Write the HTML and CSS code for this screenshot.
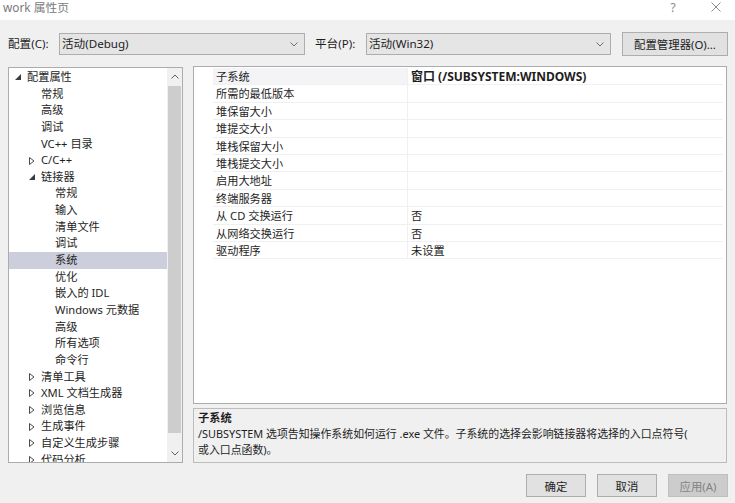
FILE: index.html
```html
<!DOCTYPE html>
<html lang="zh-CN">
<head>
<meta charset="utf-8">
<title>work 属性页</title>
<link rel="stylesheet" href="styles.css">
</head>
<body>
<div class="window">
  <div class="titlebar">
    <span class="title">work 属性页</span>
    <span class="tb-help">?</span>
    <span class="tb-close"><svg width="10" height="10" viewBox="0 0 10 10"><path d="M0.5 0.5 L9.5 9.5 M9.5 0.5 L0.5 9.5" stroke="#8a8a8a" stroke-width="1" fill="none"/></svg></span>
  </div>

  <div class="toolbar">
    <span class="lbl">配置(C):</span>
    <div class="combo combo-config">
      <span class="combo-text">活动(Debug)</span>
      <svg class="chev" width="8" height="5" viewBox="0 0 8 5"><path d="M0.5 0.5 L4 4 L7.5 0.5" stroke="#6f6f6f" fill="none"/></svg>
    </div>
    <span class="lbl lbl-platform">平台(P):</span>
    <div class="combo combo-platform">
      <span class="combo-text">活动(Win32)</span>
      <svg class="chev" width="8" height="5" viewBox="0 0 8 5"><path d="M0.5 0.5 L4 4 L7.5 0.5" stroke="#6f6f6f" fill="none"/></svg>
    </div>
    <button class="btn btn-manager">配置管理器(O)...</button>
  </div>

  <div class="main">
    <div class="tree">
      <div class="tree-items">
        <div class="trow lv0"><span class="tog"><svg width="6" height="6" viewBox="0 0 6 6"><path d="M6 0 L6 6 L0 6 Z" fill="#3c3c3c"/></svg></span><span>配置属性</span></div>
        <div class="trow lv1"><span class="tog"></span><span>常规</span></div>
        <div class="trow lv1"><span class="tog"></span><span>高级</span></div>
        <div class="trow lv1"><span class="tog"></span><span>调试</span></div>
        <div class="trow lv1"><span class="tog"></span><span>VC++ 目录</span></div>
        <div class="trow lv1"><span class="tog"><svg width="6" height="8" viewBox="0 0 6 8"><path d="M0.5 0.5 L5 4 L0.5 7.5 Z" fill="none" stroke="#4a4a4a"/></svg></span><span>C/C++</span></div>
        <div class="trow lv1"><span class="tog"><svg width="6" height="6" viewBox="0 0 6 6"><path d="M6 0 L6 6 L0 6 Z" fill="#3c3c3c"/></svg></span><span>链接器</span></div>
        <div class="trow lv2"><span class="tog"></span><span>常规</span></div>
        <div class="trow lv2"><span class="tog"></span><span>输入</span></div>
        <div class="trow lv2"><span class="tog"></span><span>清单文件</span></div>
        <div class="trow lv2"><span class="tog"></span><span>调试</span></div>
        <div class="trow lv2 selected"><span class="tog"></span><span>系统</span></div>
        <div class="trow lv2"><span class="tog"></span><span>优化</span></div>
        <div class="trow lv2"><span class="tog"></span><span>嵌入的 IDL</span></div>
        <div class="trow lv2"><span class="tog"></span><span>Windows 元数据</span></div>
        <div class="trow lv2"><span class="tog"></span><span>高级</span></div>
        <div class="trow lv2"><span class="tog"></span><span>所有选项</span></div>
        <div class="trow lv2"><span class="tog"></span><span>命令行</span></div>
        <div class="trow lv1"><span class="tog"><svg width="6" height="8" viewBox="0 0 6 8"><path d="M0.5 0.5 L5 4 L0.5 7.5 Z" fill="none" stroke="#4a4a4a"/></svg></span><span>清单工具</span></div>
        <div class="trow lv1"><span class="tog"><svg width="6" height="8" viewBox="0 0 6 8"><path d="M0.5 0.5 L5 4 L0.5 7.5 Z" fill="none" stroke="#4a4a4a"/></svg></span><span>XML 文档生成器</span></div>
        <div class="trow lv1"><span class="tog"><svg width="6" height="8" viewBox="0 0 6 8"><path d="M0.5 0.5 L5 4 L0.5 7.5 Z" fill="none" stroke="#4a4a4a"/></svg></span><span>浏览信息</span></div>
        <div class="trow lv1"><span class="tog"><svg width="6" height="8" viewBox="0 0 6 8"><path d="M0.5 0.5 L5 4 L0.5 7.5 Z" fill="none" stroke="#4a4a4a"/></svg></span><span>生成事件</span></div>
        <div class="trow lv1"><span class="tog"><svg width="6" height="8" viewBox="0 0 6 8"><path d="M0.5 0.5 L5 4 L0.5 7.5 Z" fill="none" stroke="#4a4a4a"/></svg></span><span>自定义生成步骤</span></div>
        <div class="trow lv1"><span class="tog"><svg width="6" height="8" viewBox="0 0 6 8"><path d="M0.5 0.5 L5 4 L0.5 7.5 Z" fill="none" stroke="#4a4a4a"/></svg></span><span>代码分析</span></div>
      </div>
      <div class="vscroll">
        <div class="sb-btn"><svg width="8" height="5" viewBox="0 0 8 5"><path d="M0.5 4.5 L4 1 L7.5 4.5" stroke="#606060" fill="none"/></svg></div>
        <div class="sb-track"><div class="sb-thumb"></div></div>
        <div class="sb-btn"><svg width="8" height="5" viewBox="0 0 8 5"><path d="M0.5 0.5 L4 4 L7.5 0.5" stroke="#606060" fill="none"/></svg></div>
      </div>
    </div>

    <div class="right">
      <div class="grid">
        <div class="grow"><div class="gut"></div><div class="gname sel">子系统</div><div class="gval bold">窗口 (/SUBSYSTEM:WINDOWS)</div></div>
        <div class="grow"><div class="gut"></div><div class="gname">所需的最低版本</div><div class="gval"></div></div>
        <div class="grow"><div class="gut"></div><div class="gname">堆保留大小</div><div class="gval"></div></div>
        <div class="grow"><div class="gut"></div><div class="gname">堆提交大小</div><div class="gval"></div></div>
        <div class="grow"><div class="gut"></div><div class="gname">堆栈保留大小</div><div class="gval"></div></div>
        <div class="grow"><div class="gut"></div><div class="gname">堆栈提交大小</div><div class="gval"></div></div>
        <div class="grow"><div class="gut"></div><div class="gname">启用大地址</div><div class="gval"></div></div>
        <div class="grow"><div class="gut"></div><div class="gname">终端服务器</div><div class="gval"></div></div>
        <div class="grow"><div class="gut"></div><div class="gname">从 CD 交换运行</div><div class="gval">否</div></div>
        <div class="grow"><div class="gut"></div><div class="gname">从网络交换运行</div><div class="gval">否</div></div>
        <div class="grow"><div class="gut"></div><div class="gname">驱动程序</div><div class="gval">未设置</div></div>
      </div>
      <div class="desc">
        <div class="desc-title">子系统</div>
        <div class="desc-text">/SUBSYSTEM 选项告知操作系统如何运行 .exe 文件。子系统的选择会影响链接器将选择的入口点符号(<br>或入口点函数)。</div>
      </div>
    </div>
  </div>

  <div class="footer">
    <button class="btn btn-foot">确定</button>
    <button class="btn btn-foot">取消</button>
    <button class="btn btn-foot disabled">应用(A)</button>
  </div>
</div>
</body>
</html>
```

FILE: styles.css
```css
html, body {
  margin: 0;
  padding: 0;
}
body {
  background: #f0f0f0;
  font-family: "Noto Sans", "Noto Sans CJK SC", sans-serif;
  font-size: 11.2px;
  color: #1e1e1e;
}
.window {
  width: 735px;
  height: 503px;
  overflow: hidden;
  display: flex;
  flex-direction: column;
  background: #f0f0f0;
}

/* title bar */
.titlebar {
  height: 20px;
  background: #ffffff;
  display: flex;
  align-items: flex-start;
  padding-left: 3px;
  box-sizing: border-box;
}
.title {
  line-height: 15px;
  color: #7a7a7a;
  font-size: 11.8px;
  flex: 1;
}
.tb-help {
  line-height: 15px;
  color: #8a8a8a;
  font-size: 12px;
  width: 12px;
  text-align: center;
}
.tb-close {
  margin-left: 32px;
  margin-right: 14px;
  padding-top: 2px;
  display: flex;
}

/* toolbar */
.toolbar {
  display: flex;
  padding: 12px 7px 0 8px;
  height: 46px;
  box-sizing: border-box;
  align-items: flex-start;
}
.lbl {
  width: 51px;
  height: 22px;
  line-height: 22px;
  margin-top: 1px;
  font-size: 11.6px;
}
.lbl-platform {
  margin-left: 10px;
}
.combo {
  height: 22px;
  margin-top: 1px;
  box-sizing: border-box;
  border: 1px solid #adadad;
  background: #e5e5e5;
  display: flex;
  align-items: center;
  padding-left: 2px;
  padding-right: 6px;
  font-size: 11.6px;
}
.combo-config { width: 246px; }
.combo-platform { width: 245px; }
.combo-text {
  flex: 1;
  line-height: 20px;
}
.chev { display: block; }

.btn {
  font-family: "Noto Sans", "Noto Sans CJK SC", sans-serif;
  font-size: 11.4px;
  color: #1e1e1e;
  background: #e1e1e1;
  border: 1px solid #adadad;
  box-sizing: border-box;
  padding: 0;
  margin: 0;
}
.btn-manager {
  width: 106px;
  height: 24px;
  margin-left: 11px;
}

/* main */
.main {
  display: flex;
  padding: 0 8px;
  gap: 10px;
  height: 397px;
}
.tree {
  width: 175px;
  height: 396px;
  margin-top: 1px;
  box-sizing: border-box;
  border: 1px solid #acacac;
  background: #ffffff;
  display: flex;
  overflow: hidden;
}
.tree-items {
  width: 158px;
  overflow: hidden;
}
.trow {
  height: 16.65px;
  line-height: 16.65px;
  display: flex;
  align-items: center;
  white-space: nowrap;
}
.trow:first-child {
  margin-top: 1px;
}
.trow.selected {
  background: #cccedb;
}
.lv0 { padding-left: 4px; }
.lv1 { padding-left: 18px; }
.lv2 { padding-left: 32px; }
.tog {
  width: 14px;
  flex: none;
  display: flex;
  align-items: center;
  padding-left: 2px;
  box-sizing: border-box;
  height: 100%;
}
.tog svg { display: block; }

.vscroll {
  width: 15px;
  background: #f0f0f0;
  display: flex;
  flex-direction: column;
}
.sb-btn {
  height: 17px;
  display: flex;
  align-items: center;
  justify-content: center;
  flex: none;
}
.sb-track {
  flex: 1;
  padding: 1px 1px 0 1px;
}
.sb-thumb {
  height: 347px;
  background: #cdcdcd;
}

.right {
  width: 534px;
  display: flex;
  flex-direction: column;
  gap: 4px;
}
.grid {
  height: 338px;
  box-sizing: border-box;
  border: 1px solid #acacac;
  background: #ffffff;
  padding-top: 1px;
  padding-right: 1px;
}
.grow {
  display: flex;
  height: 17.4px;
  line-height: 17px;
}
.gut {
  width: 19px;
  flex: none;
}
.gname {
  width: 195px;
  flex: none;
  box-sizing: border-box;
  padding-left: 3px;
  border-bottom: 1px solid #f0f0f0;
  border-right: 1px solid #f0f0f0;
  white-space: nowrap;
}
.gname.sel {
  background: #f4f4f7;
}
.gval {
  flex: 1;
  box-sizing: border-box;
  padding-left: 3px;
  border-bottom: 1px solid #f0f0f0;
  margin-right: 2px;
  white-space: nowrap;
}
.bold {
  font-weight: bold;
  font-size: 12px;
}

.desc {
  height: 55px;
  box-sizing: border-box;
  border: 1px solid #bcbcbc;
  background: #f0f0f0;
  padding: 0 4px;
}
.desc-title {
  font-weight: bold;
  line-height: 17px;
}
.desc-text {
  line-height: 16px;
  white-space: nowrap;
  font-size: 10.9px;
}

/* footer */
.footer {
  display: flex;
  justify-content: flex-end;
  gap: 11px;
  padding: 11px 7px 0 0;
}
.btn-foot {
  width: 60px;
  height: 23px;
}
.btn-foot.disabled {
  background: #cccccc;
  border-color: #bfbfbf;
  color: #838383;
}
```
